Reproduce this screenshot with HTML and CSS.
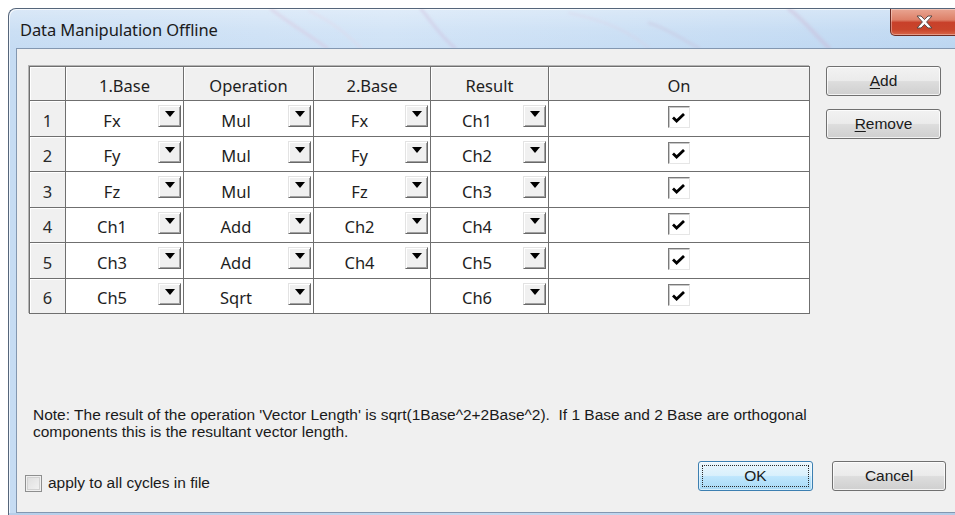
FILE: index.html
```html
<!DOCTYPE html>
<html>
<head>
<meta charset="utf-8">
<title>Data Manipulation Offline</title>
<link rel="stylesheet" href="styles.css">
</head>
<body>
<div class="window">
  <div class="titlebar">
    <svg class="glass" width="947" height="39" viewBox="0 0 947 39">
      <defs><filter id="soft"><feGaussianBlur stdDeviation="1.8"/></filter></defs>
      <g filter="url(#soft)" fill="none" stroke-linecap="round">
        <path d="M262 0 C280 14 300 26 318 39" stroke="#d9c4dc" stroke-width="3" opacity=".45"/>
        <path d="M300 2 C322 12 334 22 352 39" stroke="#e4d3e4" stroke-width="2" opacity=".4"/>
        <path d="M412 0 C424 14 430 26 446 39" stroke="#cdb7d6" stroke-width="3" opacity=".4"/>
        <path d="M560 4 C590 10 620 22 640 39" stroke="#dccbe0" stroke-width="2" opacity=".35"/>
        <path d="M640 14 C660 20 672 30 690 39" stroke="#c9bcd8" stroke-width="3" opacity=".35"/>
        <path d="M780 0 C796 12 806 26 820 39" stroke="#cdb4d2" stroke-width="4" opacity=".4"/>
      </g>
    </svg>
    <span class="title">Data Manipulation Offline</span>
    <div class="close">
      <svg width="17" height="14" viewBox="0 0 17 14">
        <polygon points="1,1 5,1 8.5,4.6 12,1 16,1 10.6,7 16,13 12,13 8.5,9.4 5,13 1,13 6.4,7" fill="#fff" stroke="#5a4a48" stroke-width="1" stroke-linejoin="round"/>
      </svg>
    </div>
  </div>

  <div class="client">
    <div class="top">
      <div class="grid">
        <div class="cell head corner"></div>
        <div class="cell head">1.Base</div>
        <div class="cell head">Operation</div>
        <div class="cell head">2.Base</div>
        <div class="cell head">Result</div>
        <div class="cell head">On</div>

        <div class="cell num">1</div>
        <div class="cell data"><span class="val">Fx</span><span class="drop"><i></i></span></div>
        <div class="cell data"><span class="val">Mul</span><span class="drop"><i></i></span></div>
        <div class="cell data"><span class="val">Fx</span><span class="drop"><i></i></span></div>
        <div class="cell data"><span class="val">Ch1</span><span class="drop"><i></i></span></div>
        <div class="cell on"><span class="check"><svg width="13" height="10" viewBox="0 0 13 10"><polyline points="1,4.5 4.6,8 12,1" fill="none" stroke="#000" stroke-width="2.8"/></svg></span></div>

        <div class="cell num">2</div>
        <div class="cell data"><span class="val">Fy</span><span class="drop"><i></i></span></div>
        <div class="cell data"><span class="val">Mul</span><span class="drop"><i></i></span></div>
        <div class="cell data"><span class="val">Fy</span><span class="drop"><i></i></span></div>
        <div class="cell data"><span class="val">Ch2</span><span class="drop"><i></i></span></div>
        <div class="cell on"><span class="check"><svg width="13" height="10" viewBox="0 0 13 10"><polyline points="1,4.5 4.6,8 12,1" fill="none" stroke="#000" stroke-width="2.8"/></svg></span></div>

        <div class="cell num">3</div>
        <div class="cell data"><span class="val">Fz</span><span class="drop"><i></i></span></div>
        <div class="cell data"><span class="val">Mul</span><span class="drop"><i></i></span></div>
        <div class="cell data"><span class="val">Fz</span><span class="drop"><i></i></span></div>
        <div class="cell data"><span class="val">Ch3</span><span class="drop"><i></i></span></div>
        <div class="cell on"><span class="check"><svg width="13" height="10" viewBox="0 0 13 10"><polyline points="1,4.5 4.6,8 12,1" fill="none" stroke="#000" stroke-width="2.8"/></svg></span></div>

        <div class="cell num">4</div>
        <div class="cell data"><span class="val">Ch1</span><span class="drop"><i></i></span></div>
        <div class="cell data"><span class="val">Add</span><span class="drop"><i></i></span></div>
        <div class="cell data"><span class="val">Ch2</span><span class="drop"><i></i></span></div>
        <div class="cell data"><span class="val">Ch4</span><span class="drop"><i></i></span></div>
        <div class="cell on"><span class="check"><svg width="13" height="10" viewBox="0 0 13 10"><polyline points="1,4.5 4.6,8 12,1" fill="none" stroke="#000" stroke-width="2.8"/></svg></span></div>

        <div class="cell num">5</div>
        <div class="cell data"><span class="val">Ch3</span><span class="drop"><i></i></span></div>
        <div class="cell data"><span class="val">Add</span><span class="drop"><i></i></span></div>
        <div class="cell data"><span class="val">Ch4</span><span class="drop"><i></i></span></div>
        <div class="cell data"><span class="val">Ch5</span><span class="drop"><i></i></span></div>
        <div class="cell on"><span class="check"><svg width="13" height="10" viewBox="0 0 13 10"><polyline points="1,4.5 4.6,8 12,1" fill="none" stroke="#000" stroke-width="2.8"/></svg></span></div>

        <div class="cell num">6</div>
        <div class="cell data"><span class="val">Ch5</span><span class="drop"><i></i></span></div>
        <div class="cell data"><span class="val">Sqrt</span><span class="drop"><i></i></span></div>
        <div class="cell data"></div>
        <div class="cell data"><span class="val">Ch6</span><span class="drop"><i></i></span></div>
        <div class="cell on"><span class="check"><svg width="13" height="10" viewBox="0 0 13 10"><polyline points="1,4.5 4.6,8 12,1" fill="none" stroke="#000" stroke-width="2.8"/></svg></span></div>
      </div>

      <div class="side">
        <button class="btn"><u>A</u>dd</button>
        <button class="btn"><u>R</u>emove</button>
      </div>
    </div>

    <p class="note">Note: The result of the operation 'Vector Length' is sqrt(1Base^2+2Base^2).&nbsp; If 1 Base and 2 Base are orthogonal<br>components this is the resultant vector length.</p>

    <div class="bottom">
      <label class="apply"><span class="box"></span>apply to all cycles in file</label>
      <button class="btn ok"><span class="focus">OK</span></button>
      <button class="btn cancel">Cancel</button>
    </div>
  </div>
  <div class="frame-bottom"></div>
</div>
</body>
</html>
```

FILE: styles.css
```css
html, body {
  margin: 0;
  padding: 0;
}

body {
  width: 955px;
  height: 515px;
  overflow: hidden;
  background: #ffffff;
  font-family: "Noto Sans", "Open Sans", sans-serif;
}

/* ---- window frame (its right edge sits at the viewport edge) ---- */
.window {
  margin: 8px 0 0 8px;
  width: 947px;
  height: 507px;
  box-sizing: border-box;
  border: 1px solid #55657a;
  border-right: none;
  border-bottom: none;
  border-radius: 8px 0 0 0;
  background: linear-gradient(90deg, #c6dcf3 0%, #cfe2f6 40%, #bcd6f1 100%);
  box-shadow: inset 1px 1px 0 rgba(255, 255, 255, 0.7);
  display: flex;
  flex-direction: column;
  position: relative;
  overflow: hidden;
}

.titlebar {
  height: 39px;
  flex: 0 0 39px;
  position: relative;
  padding-left: 11px;
  display: flex;
  align-items: center;
  background: linear-gradient(180deg, rgba(255, 255, 255, 0.35) 0%, rgba(255, 255, 255, 0.1) 55%, rgba(255, 255, 255, 0) 100%);
}

.glass {
  position: absolute;
  left: 0;
  top: 0;
}

.title {
  position: relative;
  font-size: 16.5px;
  color: #1b1b1b;
  padding-top: 2px;
  letter-spacing: -0.1px;
}

.close {
  position: absolute;
  top: 0;
  left: 881px;
  width: 70px;
  height: 27px;
  box-sizing: border-box;
  border: 1px solid #6e2b22;
  border-top: none;
  border-radius: 0 0 5px 5px;
  background: linear-gradient(180deg, #e9a592 0%, #dd8068 42%, #c8402a 52%, #c9452b 80%, #d9674a 100%);
  box-shadow: inset 0 0 0 1px rgba(255, 255, 255, 0.35);
  display: flex;
  justify-content: center;
  align-items: center;
  padding-right: 1px;
}

/* ---- client area ---- */
.client {
  margin-left: 7px;
  border: 1px solid #8397b0;
  border-right: none;
  background: #f0f0f0;
  height: 463px;
  flex: 0 0 auto;
  display: flex;
  flex-direction: column;
  font-family: "Liberation Sans", Arial, sans-serif;
  font-size: 15.5px;
  color: #1a1a1a;
}

.frame-bottom {
  flex: 1;
  background: linear-gradient(90deg, #b6cfea 0%, #c4d9f0 50%, #b3cce8 100%);
}

.top {
  display: flex;
  align-items: flex-start;
  gap: 16px;
  margin: 17px 0 0 12px;
}

/* ---- grid ---- */
.grid {
  display: grid;
  grid-template-columns: 35px 117px 129px 116px 117px 260px;
  grid-template-rows: 33px 35px 34px 35px 34px 35px 34px;
  gap: 1px;
  background: #6f6f6f;
  border: 1px solid #6f6f6f;
  box-shadow: -1px -1px 0 #b4b4b4;
  font-family: "Noto Sans", "Open Sans", sans-serif;
  font-size: 16.5px;
  color: #1e1e1e;
}

.cell {
  display: flex;
  align-items: center;
  justify-content: center;
  background: #ffffff;
  min-width: 0;
}

.head {
  background: #f0f0f0;
  box-shadow: inset 1px 1px 0 #ffffff;
  padding-top: 3px;
  box-sizing: border-box;
}

.num {
  background: #f0f0f0;
  box-shadow: inset 1px 1px 0 #ffffff;
  padding-top: 3px;
  box-sizing: border-box;
  color: #2a2a2a;
}

.data {
  align-items: flex-start;
  justify-content: flex-start;
}

.val {
  flex: 1;
  text-align: center;
  align-self: center;
  padding-top: 3px;
}

.drop {
  flex: 0 0 23px;
  width: 23px;
  height: 22px;
  box-sizing: border-box;
  margin: 4px 2px 0 0;
  background: #f0f0f0;
  border: 1px solid;
  border-color: #e3e3e3 #696969 #696969 #e3e3e3;
  box-shadow: inset 1px 1px 0 #ffffff, inset -1px -1px 0 #a0a0a0;
  display: flex;
  justify-content: center;
  align-items: flex-start;
}

.drop i {
  display: block;
  margin-top: 5px;
  width: 0;
  height: 0;
  border-left: 5px solid transparent;
  border-right: 5px solid transparent;
  border-top: 6px solid #000;
}

.on {
  align-items: flex-start;
}

.check {
  width: 22px;
  height: 22px;
  box-sizing: border-box;
  margin-top: 5px;
  background: #ffffff;
  border: 1px solid;
  border-color: #7a7a7a #e6e6e6 #e6e6e6 #7a7a7a;
  box-shadow: inset 1px 1px 0 #c8c8c8;
  display: flex;
  align-items: flex-start;
  justify-content: flex-start;
}

.check svg {
  display: block;
  margin: 6px 0 0 3px;
}

/* ---- push buttons ---- */
.side {
  display: flex;
  flex-direction: column;
  gap: 13px;
}

.btn {
  width: 115px;
  height: 30px;
  box-sizing: border-box;
  padding: 0;
  border: 1px solid #707070;
  border-radius: 3px;
  background: linear-gradient(180deg, #f2f2f2 0%, #ebebeb 48%, #dddddd 52%, #cfcfcf 100%);
  box-shadow: inset 0 0 0 1px rgba(255, 255, 255, 0.75);
  font-family: "Liberation Sans", Arial, sans-serif;
  font-size: 15.5px;
  color: #1a1a1a;
  display: flex;
  align-items: center;
  justify-content: center;
}

.btn u {
  text-decoration: underline;
  text-underline-offset: 2px;
}

.ok {
  border-color: #3c7fb1;
  background: linear-gradient(180deg, #eaf6fd 0%, #d9f0fc 48%, #bee6fd 52%, #a7d9f5 100%);
  box-shadow: inset 0 0 0 1px rgba(255, 255, 255, 0.5);
  padding: 3px;
}

.focus {
  flex: 1;
  align-self: stretch;
  display: flex;
  align-items: center;
  justify-content: center;
  border: 1px dotted #2b2b2b;
}

.cancel {
  width: 114px;
  margin-left: 19px;
}

/* ---- note and bottom row ---- */
.note {
  margin: 92px 0 0 16px;
  line-height: 17px;
  font-size: 15.5px;
  color: #1a1a1a;
}

.bottom {
  display: flex;
  align-items: flex-start;
  margin: 21px 0 0 8px;
}

.apply {
  width: 673px;
  display: flex;
  align-items: center;
  gap: 6px;
  margin-top: 13px;
  height: 18px;
}

.box {
  width: 17px;
  height: 17px;
  box-sizing: border-box;
  border: 1px solid #8e8f8f;
  background: linear-gradient(135deg, #dcdcdc 0%, #f4f4f4 100%);
  box-shadow: inset 0 0 0 1px #f0f0f0, inset 0 0 0 2px #d2d2d2;
}
```
